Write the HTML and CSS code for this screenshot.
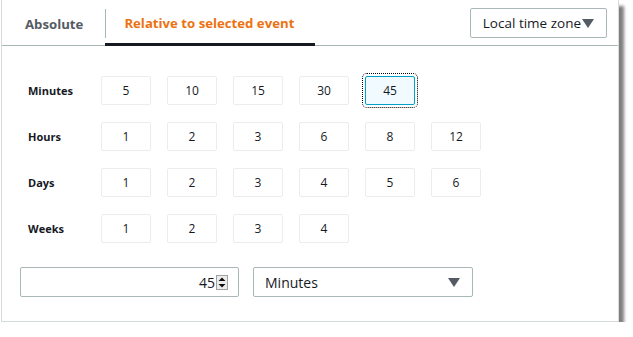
FILE: index.html
```html
<!DOCTYPE html>
<html>
  <head>
    <title>Time range</title>
    <meta charset="utf-8" />
    <link rel="stylesheet" href="styles.css">
  </head>
  <body>
    <div class="panel">
      <div class="tabs">
        <div class="tab">Absolute</div>
        <div class="tab active">Relative to selected event</div>
        <button class="tz">Local time zone<span class="caret-sm"></span></button>
      </div>

      <div class="ranges">
        <div class="label">Minutes</div>
        <div class="opts">
          <span class="opt">5</span>
          <span class="opt">10</span>
          <span class="opt">15</span>
          <span class="opt">30</span>
          <span class="opt selected">45</span>
        </div>

        <div class="label">Hours</div>
        <div class="opts">
          <span class="opt">1</span>
          <span class="opt">2</span>
          <span class="opt">3</span>
          <span class="opt">6</span>
          <span class="opt">8</span>
          <span class="opt">12</span>
        </div>

        <div class="label">Days</div>
        <div class="opts">
          <span class="opt">1</span>
          <span class="opt">2</span>
          <span class="opt">3</span>
          <span class="opt">4</span>
          <span class="opt">5</span>
          <span class="opt">6</span>
        </div>

        <div class="label">Weeks</div>
        <div class="opts">
          <span class="opt">1</span>
          <span class="opt">2</span>
          <span class="opt">3</span>
          <span class="opt">4</span>
        </div>
      </div>

      <div class="custom">
        <div class="num">
          <span>45</span>
          <span class="spin">
            <svg width="12" height="15" viewBox="0 0 12 15">
              <rect x="0.5" y="0.5" width="11" height="14" fill="#ececec" stroke="#a0a0a0" />
              <path d="M2.5 6 L6 2.5 L9.5 6 Z" fill="#111" />
              <path d="M2.5 9 L6 12.5 L9.5 9 Z" fill="#111" />
            </svg>
          </span>
        </div>
        <div class="unit">
          <span>Minutes</span>
          <span class="caret"></span>
        </div>
      </div>
    </div>
  </body>
</html>
```

FILE: styles.css
```css
* {
  box-sizing: border-box;
}
html,
body {
  margin: 0;
  background: #ffffff;
  font-family: "Open Sans", "Noto Sans", sans-serif;
  color: #16191f;
}

.panel {
  margin-left: 1px;
  width: 618px;
  height: 322px;
  background: #ffffff;
  border: 1px solid #d5dbdb;
  border-top: none;
  box-shadow: 5px 6px 3px rgba(0, 0, 0, 0.5);
}

.tabs {
  display: flex;
  align-items: stretch;
  height: 46px;
  border-bottom: 1px solid #aab7b8;
}

.tab {
  display: flex;
  align-items: center;
  font-size: 13.2px;
  font-weight: 700;
  color: #545b64;
  padding-top: 3px;
}
.tab:first-child {
  padding-left: 23px;
  padding-right: 22px;
}
.tab.active {
  position: relative;
  color: #ec7211;
  padding-left: 19px;
  padding-right: 21px;
  border-bottom: 3px solid #16191f;
  margin-bottom: -1px;
}
.tab.active::before {
  content: "";
  position: absolute;
  left: 0;
  top: 9px;
  height: 29px;
  border-left: 1px solid #aab7b8;
}

.tz {
  margin: 8px 11px 0 auto;
  height: 30px;
  padding: 0 12px;
  font-family: inherit;
  font-size: 13.5px;
  color: #16191f;
  background: #ffffff;
  border: 1px solid #aab7b8;
  border-radius: 2px;
  display: flex;
  align-items: center;
}

.caret-sm {
  display: inline-block;
  margin-left: 1px;
  border-left: 6px solid transparent;
  border-right: 6px solid transparent;
  border-top: 9px solid #545b64;
}

.ranges {
  display: grid;
  grid-template-columns: 73px auto;
  row-gap: 17px;
  align-items: center;
  padding: 30px 0 0 26px;
}

.label {
  font-size: 11px;
  font-weight: 700;
}

.opts {
  display: flex;
  gap: 16px;
}

.opt {
  width: 50px;
  height: 29px;
  display: flex;
  align-items: center;
  justify-content: center;
  font-size: 12px;
  border: 1px solid #eaeded;
  border-radius: 2px;
}

.opt.selected {
  background: #f1faff;
  border-color: #00a1c9;
  outline: 1px dotted #000000;
  outline-offset: 2px;
}

.custom {
  display: flex;
  gap: 14px;
  padding: 24px 0 0 18px;
}

.num,
.unit {
  height: 30px;
  width: 219px;
  border: 1px solid #aab7b8;
  border-radius: 2px;
  display: flex;
  align-items: center;
  font-size: 14px;
}

.num {
  justify-content: flex-end;
  padding-right: 10px;
}

.spin {
  display: flex;
  margin-left: 1px;
}

.unit {
  width: 220px;
  justify-content: space-between;
  padding: 0 12px 0 11px;
}

.caret {
  border-left: 6px solid transparent;
  border-right: 6px solid transparent;
  border-top: 9px solid #545b64;
}
```
